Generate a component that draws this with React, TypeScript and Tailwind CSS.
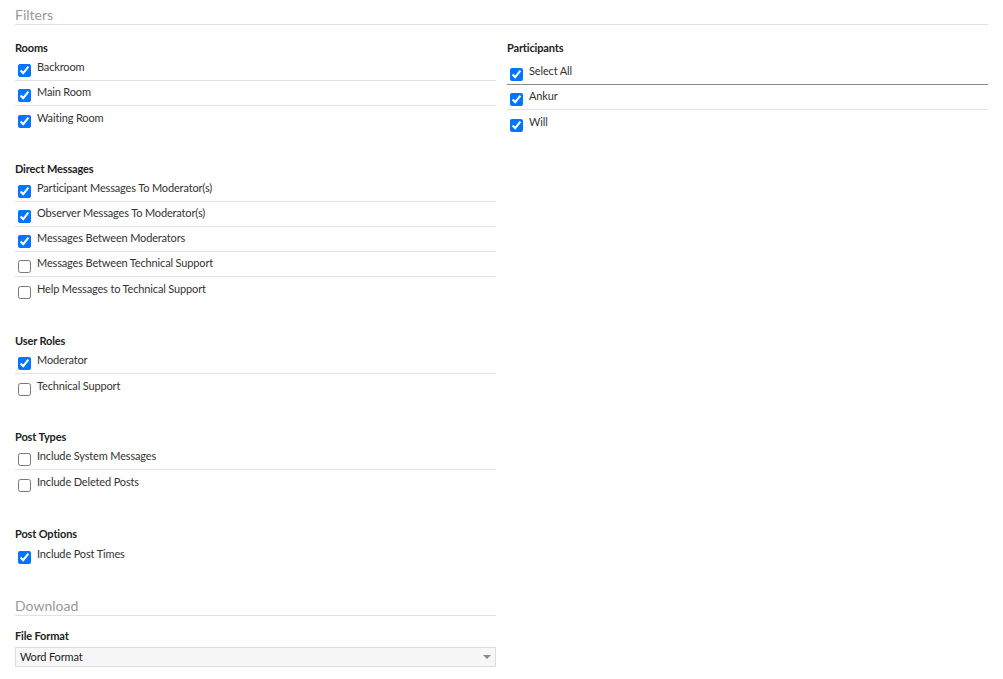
import React from 'react';

type Item = { label: string; checked: boolean };

const rooms: Item[] = [
  { label: 'Backroom', checked: true },
  { label: 'Main Room', checked: true },
  { label: 'Waiting Room', checked: true },
];

const directMessages: Item[] = [
  { label: 'Participant Messages To Moderator(s)', checked: true },
  { label: 'Observer Messages To Moderator(s)', checked: true },
  { label: 'Messages Between Moderators', checked: true },
  { label: 'Messages Between Technical Support', checked: false },
  { label: 'Help Messages to Technical Support', checked: false },
];

const userRoles: Item[] = [
  { label: 'Moderator', checked: true },
  { label: 'Technical Support', checked: false },
];

const postTypes: Item[] = [
  { label: 'Include System Messages', checked: false },
  { label: 'Include Deleted Posts', checked: false },
];

const postOptions: Item[] = [{ label: 'Include Post Times', checked: true }];

const participants: Item[] = [
  { label: 'Ankur', checked: true },
  { label: 'Will', checked: true },
];

const CheckRow: React.FC<{ item: Item; last?: boolean }> = ({ item, last }) => (
  <label
    className={`flex items-center h-[25px] text-[11px] tracking-[-0.15px] text-[#333] ${
      last ? '' : 'border-b border-[#e2e2e2]'
    }`}
  >
    <input
      type="checkbox"
      defaultChecked={item.checked}
      className="w-[13px] h-[13px] ml-[3px] mr-[6px] mt-[5px] accent-[#0075ff]"
    />
    <span className="pb-[1px]">{item.label}</span>
  </label>
);

const Section: React.FC<{ title: string; items: Item[]; className?: string }> = ({
  title,
  items,
  className,
}) => (
  <div className={className}>
    <h3 className="text-[11px] leading-[16px] tracking-[-0.15px] font-bold text-[#222]">{title}</h3>
    {items.map((item, i) => (
      <CheckRow key={item.label} item={item} last={i === items.length - 1} />
    ))}
  </div>
);

export default function App() {
  return (
    <div className="px-[15px] pt-[6px] bg-white min-h-screen" style={{ fontFamily: 'Lato, "Open Sans", sans-serif' }}>
      <h2 className="text-[14px] leading-[17px] text-[#999] border-b border-[#e2e2e2] pb-[1px] w-[973px]">
        Filters
      </h2>
      <div className="grid grid-cols-[481px_481px] gap-x-[11px] pt-[15px]">
        <div>
          <Section title="Rooms" items={rooms} className="mb-[30px]" />
          <Section title="Direct Messages" items={directMessages} className="mb-[31px]" />
          <Section title="User Roles" items={userRoles} className="mb-[30px]" />
          <Section title="Post Types" items={postTypes} className="mb-[31px]" />
          <Section title="Post Options" items={postOptions} className="mb-[30px]" />

          <h2 className="text-[14px] leading-[17px] text-[#999] border-b border-[#e2e2e2] pb-[1px]">
            Download
          </h2>
          <h3 className="text-[11px] leading-[16px] tracking-[-0.15px] font-bold text-[#222] mt-[12px]">File Format</h3>
          <div className="mt-[3px] h-[20px] flex items-center justify-between border border-[#dcdcdc] bg-[#f7f7f7] pl-[4px] pr-[3px] text-[11px] tracking-[-0.15px] text-[#222]">
            <span>Word Format</span>
            <svg width="8" height="4" viewBox="0 0 8 4" className="mr-[1px]">
              <path d="M0 0 L8 0 L4 4 Z" fill="#888" />
            </svg>
          </div>
        </div>

        <div>
          <h3 className="text-[11px] leading-[16px] tracking-[-0.15px] font-bold text-[#222]">Participants</h3>
          <label className="flex items-center h-[29px] pt-[3px] text-[11px] tracking-[-0.15px] text-[#333] border-b border-[#8a8a8a]">
            <input
              type="checkbox"
              defaultChecked
              className="w-[13px] h-[13px] ml-[3px] mr-[6px] mt-[5px] accent-[#0075ff]"
            />
            <span className="pb-[1px]">Select All</span>
          </label>
          {participants.map((item, i) => (
            <CheckRow key={item.label} item={item} last={i === participants.length - 1} />
          ))}
        </div>
      </div>
    </div>
  );
}
